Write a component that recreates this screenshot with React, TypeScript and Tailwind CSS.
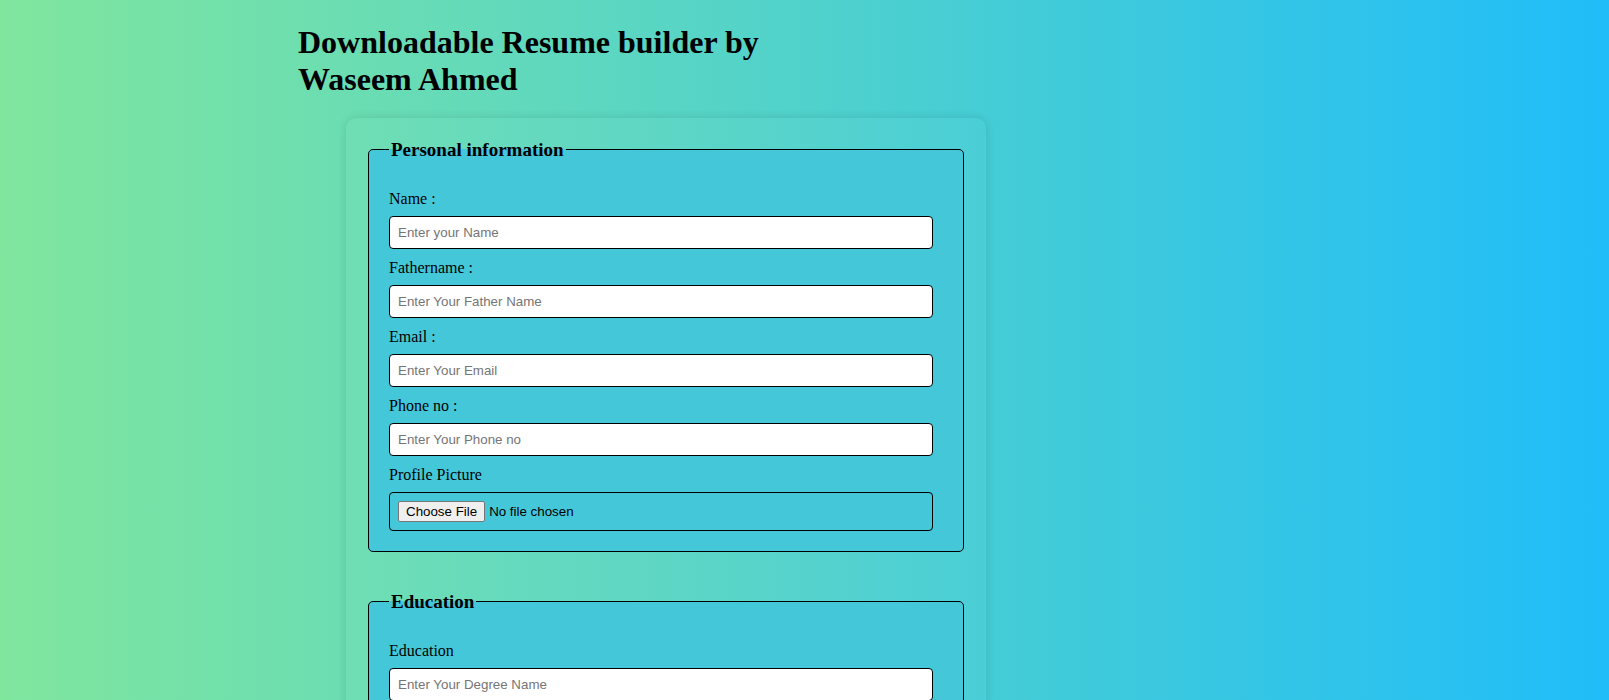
import React from "react";

const serif = "font-['Liberation_Serif','Times_New_Roman',serif]";

function Field({ label, placeholder }: { label: string; placeholder: string }) {
  return (
    <div className="flex flex-col">
      <label className="text-[16px] leading-[18px] mb-[8px] text-black">{label}</label>
      <input
        type="text"
        placeholder={placeholder}
        className="w-[544px] h-[33px] mb-[10px] bg-white border border-black rounded-[4px] px-[8px] text-[13.33px] font-['Liberation_Sans',Arial,sans-serif] text-black placeholder:text-[#757575] outline-none"
      />
    </div>
  );
}

export default function App() {
  return (
    <div
      className={`min-h-screen w-full bg-[linear-gradient(to_right,#80e69e,#20bdf9)] ${serif} text-black pb-10`}
    >
      <h1 className="ml-[298px] w-[500px] pt-[24px] mb-[20px] text-[32px] leading-[37px] font-bold">
        Downloadable Resume builder by Waseem Ahmed
      </h1>
      <div className="ml-[346px] w-[640px] rounded-[10px] bg-[rgba(255,255,255,0.03)] shadow-[0_0_10px_rgba(0,0,0,0.12)] px-[22px] pt-[21px] pb-[30px]">
        <fieldset className="border border-black rounded-[5px] bg-[#45c7da] px-[20px] pt-[30px] pb-[10px]">
          <legend className="px-[2px] text-[19px] font-bold leading-[21px]">Personal information</legend>
          <Field label="Name :" placeholder="Enter your Name" />
          <Field label="Fathername :" placeholder="Enter Your Father Name" />
          <Field label="Email :" placeholder="Enter Your Email" />
          <Field label="Phone no :" placeholder="Enter Your Phone no" />
          <div className="flex flex-col">
            <label className="text-[16px] leading-[18px] mb-[8px]">Profile Picture</label>
            <div className="w-[544px] h-[39px] mb-[10px] border border-black rounded-[4px] px-[8px] flex items-center font-['Liberation_Sans',Arial,sans-serif] text-[13.33px]">
              <button
                type="button"
                className="h-[21px] px-[7px] border border-[#767676] rounded-[2px] bg-[#efefef] text-black text-[13.33px] leading-[15px]"
              >
                Choose File
              </button>
              <span className="ml-[4px] text-black">No file chosen</span>
            </div>
          </div>
        </fieldset>

        <fieldset className="mt-[39px] border border-black rounded-[5px] bg-[#45c7da] px-[20px] pt-[30px] pb-[10px]">
          <legend className="px-[2px] text-[19px] font-bold leading-[21px]">Education</legend>
          <Field label="Education" placeholder="Enter Your Degree Name" />
          <Field label="Institute" placeholder="Enter Your Institute Name" />
          <Field label="Passing Year" placeholder="Enter Your Passing Year" />
        </fieldset>
      </div>
    </div>
  );
}
